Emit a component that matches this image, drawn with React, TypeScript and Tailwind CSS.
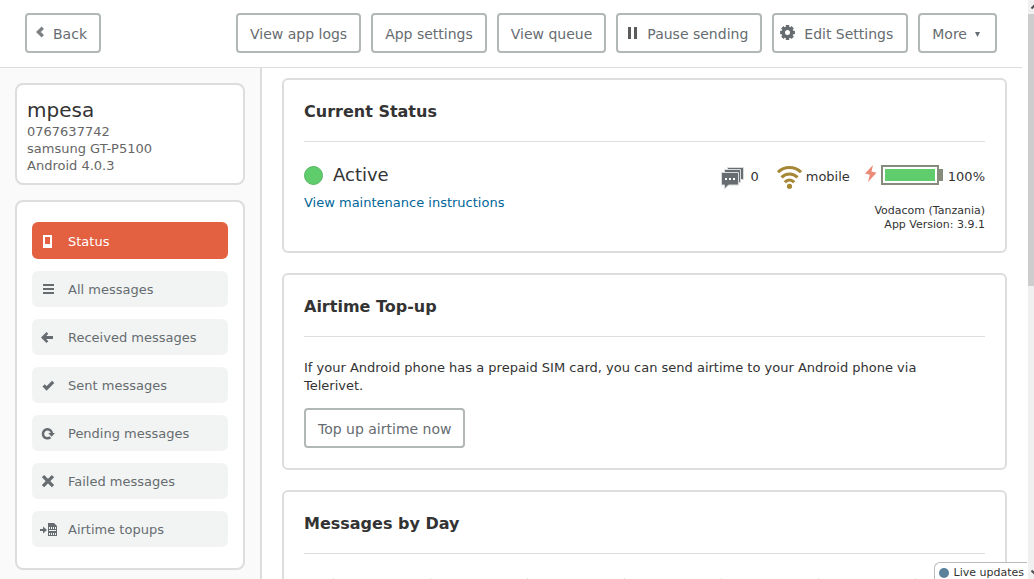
import type { ReactNode } from 'react';

const toolbarButton =
  'flex h-10 items-center rounded border-2 border-[#b2b7b7] bg-white pt-[2px] text-[14px] whitespace-nowrap text-[#666c70] hover:bg-gray-50';

function ChevronIcon() {
  return (
    <svg width="8" height="16" viewBox="0 0 8 16" aria-hidden="true">
      <path d="M6.8 1.8 2.4 6l4.4 4.2" fill="none" stroke="#7b8083" strokeWidth="3.4" />
    </svg>
  );
}

function PauseIcon() {
  return (
    <svg width="9" height="14" viewBox="0 0 9 14" fill="#5b5b5b" aria-hidden="true">
      <path d="M0 0h3v12H0zM6 0h3v12H6z" />
    </svg>
  );
}

function GearIcon() {
  return (
    <svg width="15" height="18" viewBox="-7.5 -7.5 15 18" fill="#666c70" aria-hidden="true">
      <circle r="4.2" fill="none" stroke="#666c70" strokeWidth="3.4" />
      {[0, 45, 90, 135].map((angle) => (
        <g key={angle} transform={`rotate(${angle})`}>
          <path d="M-1.7 -7.4h3.4v3h-3.4zM-1.7 4.4h3.4v3h-3.4z" />
        </g>
      ))}
    </svg>
  );
}

function PhoneIcon() {
  return (
    <svg width="17" height="14" viewBox="0 0 17 14" aria-hidden="true">
      <path d="M3 0h9v13H3zM5 2v7h5V2z" fill="#fff" fillRule="evenodd" />
    </svg>
  );
}

function ListIcon() {
  return (
    <svg width="17" height="14" viewBox="0 0 17 14" fill="#666c70" aria-hidden="true">
      <path d="M3 1h11v2H3zM3 5h11v2H3zM3 9h11v2H3z" />
    </svg>
  );
}

function ArrowLeftIcon() {
  return (
    <svg width="17" height="14" viewBox="0 0 17 14" fill="#666c70" aria-hidden="true">
      <path d="M1 6.500 6.5.9 8.3 2.700 6.2 5H13v3H6.2l2.1 2.300-1.8 1.800z" />
    </svg>
  );
}

function CheckIcon() {
  return (
    <svg width="17" height="14" viewBox="0 0 17 14" aria-hidden="true">
      <path d="M3.6 6.4 6.6 9.4l6.6-6.6" fill="none" stroke="#666c70" strokeWidth="3.2" />
    </svg>
  );
}

function RefreshIcon() {
  return (
    <svg width="17" height="14" viewBox="0 0 17 14" aria-hidden="true">
      <path d="M10.4 10.2A4.5 4.5 0 1 1 11.9 6.4" fill="none" stroke="#666c70" strokeWidth="2.5" />
      <path d="M8.2 6h6.8L11.6 9.8z" fill="#666c70" />
    </svg>
  );
}

function CrossIcon() {
  return (
    <svg width="17" height="14" viewBox="0 0 17 14" aria-hidden="true">
      <path d="m3 1.2 10 10M13 1.2 3 11.2" stroke="#666c70" strokeWidth="3.2" />
    </svg>
  );
}

function SimIcon() {
  return (
    <svg width="18" height="14" viewBox="0 0 18 14" fill="#666c70" aria-hidden="true">
      <path d="M0 6h3V3.5L7 7 3 10.5V8H0z" />
      <path d="M8 0h6l3 3v10H8z" />
      <path
        d="M9 4h1v2H9zM11 4h1v2h-1zM13 4h1v2h-1zM15 4h1v2h-1zM9 7h7v1H9zM9 10h1v2H9zM11 10h1v2h-1zM13 10h1v2h-1zM15 10h1v2h-1z"
        fill="#f2f4f4"
      />
    </svg>
  );
}

function QueueIcon() {
  return (
    <svg width="23" height="26" viewBox="0 -3 23 26" aria-hidden="true">
      <g fill="#666c70" stroke="#d9dcdc" strokeWidth="1">
        <path d="M6.5.5h16v12h-16z" />
        <path d="M3.5 2.5h16v13h-16z" />
        <path d="M.5 5.5h17V18h-10l-4 4v-4h-3z" />
      </g>
      <path d="M4 11h2v2H4zM8 11h2v2H8zM12 11h2v2h-2z" fill="#fff" />
    </svg>
  );
}

function WifiIcon() {
  return (
    <svg width="25" height="24" viewBox="0 0 25 24" aria-hidden="true">
      <g fill="none" stroke="#a58735" strokeWidth="3">
        <path d="M1 7.2C7.4.9 17.6.9 24 7.2" />
        <path d="M4.5 12.4c4.4-4.7 11.6-4.7 16 0" />
        <path d="M7.8 17.2c2.6-3 6.8-3 9.4 0" />
      </g>
      <circle cx="12.5" cy="21.3" r="2.6" fill="#a58735" />
    </svg>
  );
}

function BatteryIcon() {
  return (
    <svg width="78" height="24" viewBox="0 0 78 24" aria-hidden="true">
      <path d="M8 0 0 8.5l4.8 1.2L3 17l8.5-9.3-5-1.1z" fill="#ec8b77" />
      <path d="M16 0h58v20H16zM18 2v16h54V2z" fill="#868c7c" fillRule="evenodd" />
      <path d="M74 4h4v12h-4z" fill="#868c7c" />
      <path d="M20 4h50v12H20z" fill="#60cd6c" />
    </svg>
  );
}

const folders = [
  { label: 'Status', icon: <PhoneIcon />, active: true },
  { label: 'All messages', icon: <ListIcon /> },
  { label: 'Received messages', icon: <ArrowLeftIcon /> },
  { label: 'Sent messages', icon: <CheckIcon /> },
  { label: 'Pending messages', icon: <RefreshIcon /> },
  { label: 'Failed messages', icon: <CrossIcon /> },
  { label: 'Airtime topups', icon: <SimIcon /> },
];

function Card({ title, children }: { title: string; children: ReactNode }) {
  return (
    <section className="rounded-md border-2 border-[#dcdddd] bg-white p-5">
      <h2 className="border-b border-[#dcdddd] pb-[17px] text-[16px] leading-6 font-bold text-[#333]">{title}</h2>
      {children}
    </section>
  );
}

export default function App() {
  return (
    <div className="flex h-screen overflow-hidden bg-white font-['Verdana','DejaVu_Sans',sans-serif] text-[13px] text-[#333]">
      <div className="flex min-w-0 flex-1 flex-col">
        <header className="mr-[6px] flex h-[68px] shrink-0 items-center justify-between border-b border-[#dcdddd] pr-[25px] pb-px pl-[25px]">
          <button type="button" className={toolbarButton + ' gap-[9px] pr-3 pl-[9px]'}>
            <ChevronIcon />
            Back
          </button>
          <div className="flex gap-[10px]">
            <button type="button" className={toolbarButton + ' px-3'}>View app logs</button>
            <button type="button" className={toolbarButton + ' px-3'}>App settings</button>
            <button type="button" className={toolbarButton + ' px-3'}>View queue</button>
            <button type="button" className={toolbarButton + ' gap-[10px] pr-3 pl-[10px]'}>
              <PauseIcon />
              Pause sending
            </button>
            <button type="button" className={toolbarButton + ' gap-[9px] pr-[13px] pl-[6px]'}>
              <GearIcon />
              Edit Settings
            </button>
            <button type="button" className={toolbarButton + ' gap-2 pr-[15px] pl-3'}>
              More
              <svg width="5" height="5" viewBox="0 0 5 5" fill="#666c70" aria-hidden="true">
                <path d="M0 0h5L2.5 5z" />
              </svg>
            </button>
          </div>
        </header>

        <div className="flex min-h-0 flex-1">
          <aside className="flex w-[262px] shrink-0 flex-col gap-[15px] border-r-2 border-[#dcdddd] bg-[#fafafa] p-[15px]">
            <div className="rounded-lg border-2 border-[#dcdddd] bg-white px-[10px] pt-3 pb-[9px] leading-[17px] text-[#666]">
              <h1 className="text-[20px] leading-[26px] text-[#333]">mpesa</h1>
              <p>0767637742</p>
              <p>samsung GT-P5100</p>
              <p>Android 4.0.3</p>
            </div>
            <nav className="rounded-lg border-2 border-[#dcdddd] bg-white px-[15px] pt-5 pb-[21px]">
              <ul className="flex flex-col gap-3">
                {folders.map((folder) => (
                  <li key={folder.label}>
                    <a
                      href="#"
                      className={
                        folder.active
                          ? 'flex h-[37px] items-center gap-[10px] rounded-md bg-[#e36040] px-2 pt-[2px] text-white'
                          : 'flex h-9 items-center gap-[10px] rounded-md bg-[#f2f4f4] px-2 pt-[2px] text-[#666c70]'
                      }
                    >
                      <span className="w-[18px]">{folder.icon}</span>
                      {folder.label}
                    </a>
                  </li>
                ))}
              </ul>
            </nav>
          </aside>

          <main className="flex min-w-0 flex-1 flex-col gap-5 overflow-hidden pt-[10px] pr-[21px] pl-5 *:shrink-0">
            <Card title="Current Status">
              <div className="flex justify-between pt-[19px]">
                <div>
                  <div className="flex items-center gap-[10px] text-[18px] leading-7">
                    <span className="size-[19px] rounded-full border border-[#55b560] bg-[#60cd6c]" />
                    Active
                  </div>
                  <a href="#" className="leading-7 text-[#069]">View maintenance instructions</a>
                </div>
                <div className="flex flex-col items-end pt-[2px]">
                  <div className="flex h-7 items-center">
                    <QueueIcon />
                    <span className="ml-[6px]">0</span>
                    <span className="ml-[18px]"><WifiIcon /></span>
                    <span className="ml-1">mobile</span>
                    <span className="ml-[15px]"><BatteryIcon /></span>
                    <span className="ml-[5px]">100%</span>
                  </div>
                  <p className="-mb-px pt-[13px] text-right text-[11px] leading-[14px]">
                    Vodacom (Tanzania)
                    <br />
                    App Version: 3.9.1
                  </p>
                </div>
              </div>
            </Card>

            <Card title="Airtime Top-up">
              <p className="max-w-[640px] pt-[22px] pb-[13px] leading-[18px]">
                If your Android phone has a prepaid SIM card, you can send airtime to your Android phone via Telerivet.
              </p>
              <button type="button" className={toolbarButton + ' px-3'}>Top up airtime now</button>
            </Card>

            <Card title="Messages by Day">
              <div className="mt-6 ml-[29px] flex h-40">
                {[0, 1, 2, 3, 4, 5, 6].map((day) => (
                  <div key={day} className="w-[97px] shrink-0 border-l border-[#ddd]" />
                ))}
              </div>
            </Card>
          </main>
        </div>
      </div>

      <div className="flex w-[6px] shrink-0 flex-col bg-[#f0f0f0]">
        <svg className="h-[14px] w-[6px]" viewBox="0 0 6 14" aria-hidden="true">
          <path d="M3.5 8.5 7 5" stroke="#505050" strokeWidth="2" />
        </svg>
        <div className="h-[272px] bg-[#cdcdcd]" />
        <svg className="mt-auto h-[14px] w-[6px]" viewBox="0 0 6 14" aria-hidden="true">
          <path d="M3.5 5.5 7 9" stroke="#505050" strokeWidth="2" />
        </svg>
      </div>

      <div className="fixed right-[7px] bottom-0 flex h-[17px] items-center gap-[5px] rounded-tl-md border-t border-l border-[#bbb] bg-white pt-[3px] pr-[3px] pl-1 text-[11px] leading-[14px]">
        <span className="size-[10px] rounded-full bg-[#5b809b]" />
        Live updates
      </div>
    </div>
  );
}
